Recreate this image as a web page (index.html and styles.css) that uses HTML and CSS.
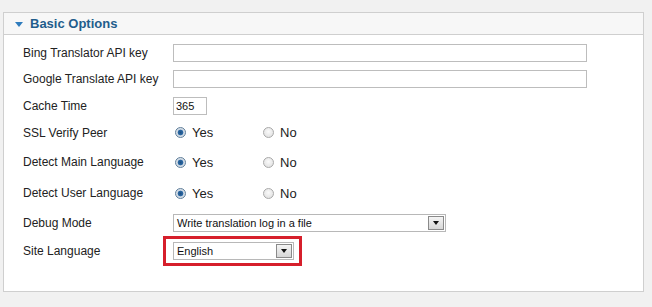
FILE: index.html
```html
<!DOCTYPE html>
<html>
<head>
<meta charset="utf-8">
<link rel="stylesheet" href="styles.css">
</head>
<body>
<div class="page">
  <div class="panel">
    <div class="panel-head">
      <span class="caret"></span>
      <span class="title">Basic Options</span>
    </div>
    <div class="panel-body">
      <div class="row r1">
        <label class="lbl">Bing Translator API key</label>
        <input class="text wide" type="text">
      </div>
      <div class="row r2">
        <label class="lbl">Google Translate API key</label>
        <input class="text wide" type="text">
      </div>
      <div class="row r3">
        <label class="lbl">Cache Time</label>
        <input class="text short" type="text" value="365">
      </div>
      <div class="row r4">
        <label class="lbl">SSL Verify Peer</label>
        <div class="radios">
          <span class="opt"><span class="radio on"></span>Yes</span>
          <span class="opt"><span class="radio"></span>No</span>
        </div>
      </div>
      <div class="row r5">
        <label class="lbl">Detect Main Language</label>
        <div class="radios">
          <span class="opt"><span class="radio on"></span>Yes</span>
          <span class="opt"><span class="radio"></span>No</span>
        </div>
      </div>
      <div class="row r6">
        <label class="lbl">Detect User Language</label>
        <div class="radios">
          <span class="opt"><span class="radio on"></span>Yes</span>
          <span class="opt"><span class="radio"></span>No</span>
        </div>
      </div>
      <div class="row r7">
        <label class="lbl">Debug Mode</label>
        <div class="select debug">
          <span class="sel-text">Write translation log in a file</span>
          <span class="sel-btn"><span class="arrow"></span></span>
        </div>
      </div>
      <div class="row r8">
        <label class="lbl">Site Language</label>
        <div class="highlight">
          <div class="select lang">
            <span class="sel-text">English</span>
            <span class="sel-btn"><span class="arrow"></span></span>
          </div>
        </div>
      </div>
    </div>
  </div>
</div>
</body>
</html>
```
FILE: styles.css
```css
html, body {
  margin: 0;
  padding: 0;
  background: #f1f1f1;
}
body {
  width: 652px;
  height: 307px;
  overflow: hidden;
  font-family: "Liberation Sans", Arial, sans-serif;
  font-size: 12px;
  color: #222;
}
.page {
  padding: 12px 0 0 3px;
}
.panel {
  box-sizing: border-box;
  width: 641px;
  height: 280px;
  border: 1px solid #cfcfcf;
  background: #fff;
}
.panel-head {
  box-sizing: border-box;
  height: 22px;
  background: #f7f7f7;
  border-bottom: 1px solid #cfcfcf;
  display: flex;
  align-items: center;
  padding-left: 11px;
}
.caret {
  width: 0;
  height: 0;
  border-left: 4px solid transparent;
  border-right: 4px solid transparent;
  border-top: 5px solid #2f7cbd;
  margin-right: 7px;
  margin-top: 1px;
}
.title {
  font-weight: bold;
  font-size: 13px;
  color: #1f5d8c;
}
.panel-body {
  padding: 5px 0 0 19px;
}
.row {
  display: flex;
  align-items: center;
}
.r1 { height: 26px; }
.r2 { height: 26px; }
.r3 { height: 27px; }
.r4 { height: 27px; }
.r5 { height: 32px; }
.r6 { height: 30px; }
.r7 { height: 29px; }
.r8 { height: 27px; }
.lbl {
  width: 150px;
  flex: none;
}
.text {
  box-sizing: border-box;
  height: 18px;
  border: 1px solid #bdbdbd;
  background: #fff;
  font-family: "Liberation Sans", Arial, sans-serif;
  font-size: 12px;
  padding: 0 2px;
  margin: 0;
  color: #111;
}
.wide { width: 414px; }
.short { width: 34px; font-size: 11px; }
.radios {
  display: flex;
}
.opt {
  display: flex;
  align-items: center;
  width: 86px;
  font-size: 13px;
  color: #222;
  padding-left: 2px;
}
.radio {
  width: 11px;
  height: 11px;
  box-sizing: border-box;
  border-radius: 50%;
  border: 1px solid #a9a9a9;
  background: radial-gradient(circle at 50% 40%, #fafafa 0%, #dcdcdc 100%);
  margin-right: 6px;
}
.radio.on {
  border-color: #5f7e9a;
  background: radial-gradient(circle, #1c4f82 0, #2d6aa6 2.5px, #cfd9e3 3.2px, #e9eef3 100%);
}
.select {
  box-sizing: border-box;
  height: 18px;
  border: 1px solid #b8b8b8;
  background: #fff;
  display: flex;
  align-items: center;
  justify-content: space-between;
  padding-left: 3px;
  padding-right: 1px;
  font-size: 11px;
  color: #111;
}
.debug { width: 273px; }
.lang { width: 121px; }
.sel-btn {
  width: 16px;
  height: 14px;
  box-sizing: border-box;
  border: 1px solid #8a8a8a;
  background: linear-gradient(#f4f4f4, #d6d6d6);
  display: flex;
  align-items: center;
  justify-content: center;
}
.arrow {
  width: 0;
  height: 0;
  border-left: 3.5px solid transparent;
  border-right: 3.5px solid transparent;
  border-top: 4px solid #111;
  margin-top: 1px;
}
.highlight {
  margin-left: -10px;
  border: 3px solid #d61f2b;
  padding: 3px 5px 3px 7px;
  display: flex;
}
```
